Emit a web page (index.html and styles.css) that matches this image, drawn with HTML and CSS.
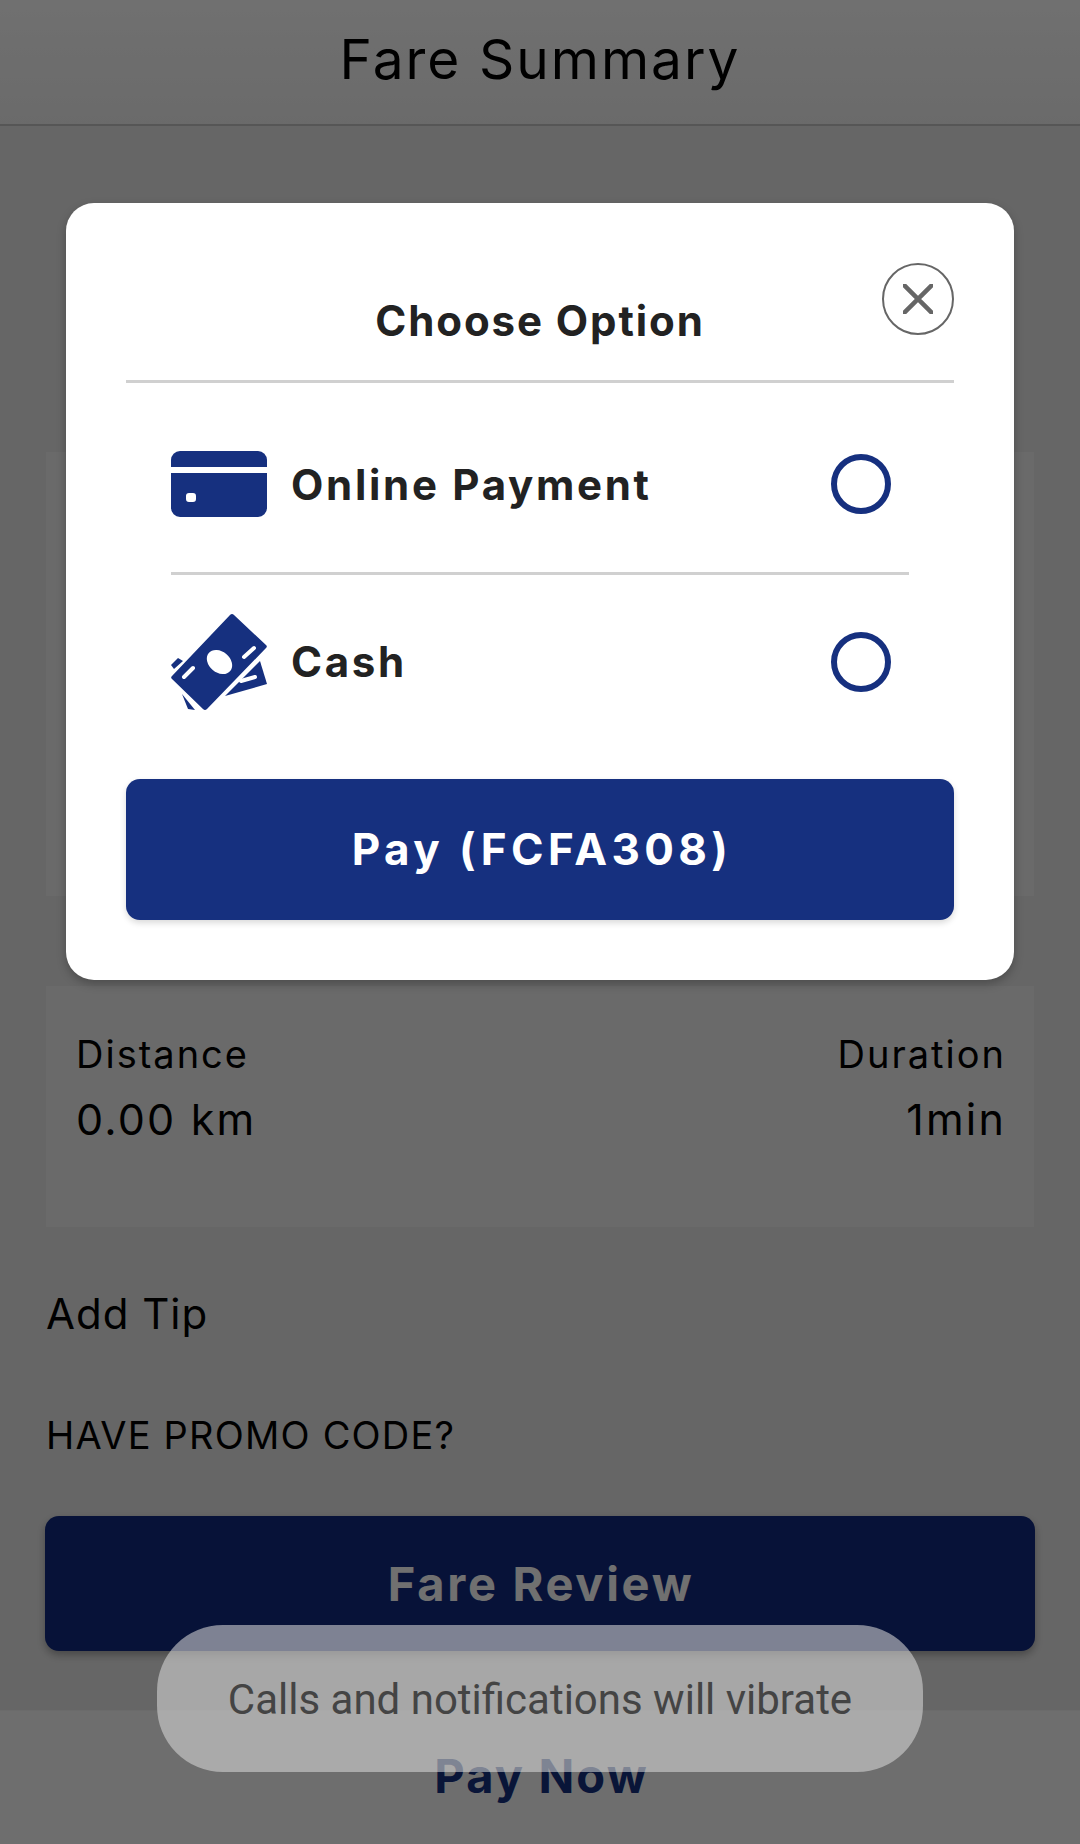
FILE: index.html
```html
<!DOCTYPE html>
<html lang="en">
<head>
<meta charset="utf-8">
<title>Fare Summary</title>
<link rel="stylesheet" href="styles.css">
</head>
<body>
<div class="screen">
  <header class="topbar"><h1 class="topbar-title">Fare Summary</h1></header>
  <main class="content">
    <section class="panel panel-fare"></section>
    <section class="panel panel-trip">
      <div class="trip-col">
        <span class="trip-label">Distance</span>
        <span class="trip-value">0.00 km</span>
      </div>
      <div class="trip-col trip-col-end">
        <span class="trip-label">Duration</span>
        <span class="trip-value">1min</span>
      </div>
    </section>
    <p class="tip">Add Tip</p>
    <p class="promo">HAVE PROMO CODE?</p>
    <button class="review" type="button">Fare Review</button>
  </main>
  <footer class="paybar"><span class="paybar-label">Pay Now</span></footer>

  <div class="scrim"></div>

  <div class="modal">
    <div class="modal-head">
      <h2 class="modal-title">Choose Option</h2>
      <span class="close">
        <svg class="close-x" viewBox="0 0 30 30"><path d="M1 1 29 29M29 1 1 29"/></svg>
      </span>
    </div>
    <div class="option option-first">
      <svg class="option-icon card-icon" viewBox="0 0 96 66">
        <path d="M0 16V9a9 9 0 0 1 9-9h78a9 9 0 0 1 9 9v7z"/>
        <path fill-rule="evenodd" d="M0 22h96v35a9 9 0 0 1-9 9H9a9 9 0 0 1-9-9zM18 42a3 3 0 0 0-3 3v3a3 3 0 0 0 3 3h4a3 3 0 0 0 3-3v-3a3 3 0 0 0-3-3z"/>
      </svg>
      <span class="option-label">Online Payment</span>
      <span class="radio"></span>
    </div>
    <div class="option option-second">
      <svg class="option-icon cash-icon" viewBox="0 0 96 98">
        <path d="M0 51 7 44 12 47 3 55Z"/>
        <path d="M11 80 24 96 17 95Z"/>
        <path d="M54 82 89 47 96 70Z"/>
        <path d="M59 1a3 3 0 0 1 4 0L95 31a2 2 0 0 1 0 3L36 95a3 3 0 0 1-4 0L1 65a2 2 0 0 1 0-3Z"/>
        <ellipse class="cash-cut" cx="48.500" cy="48" rx="14" ry="10.500" transform="rotate(40 48.500 48)"/>
        <path class="cash-mark" d="M73 43 83 34M13 63 22 54M70 67 84 63"/>
      </svg>
      <span class="option-label">Cash</span>
      <span class="radio"></span>
    </div>
    <button class="pay" type="button">Pay (FCFA308)</button>
  </div>

  <div class="toast">Calls and notifications will vibrate</div>
</div>
</body>
</html>
```

FILE: styles.css
```css
* { box-sizing: border-box; }

html, body { margin: 0; padding: 0; }

body {
  font-family: "Inter", "Open Sans", sans-serif;
  background: #e9e9e9;
  color: #000;
}

.screen {
  position: relative;
  width: 1080px;
  height: 1844px;
  display: flex;
  flex-direction: column;
  overflow: hidden;
  background: #e9e9e9;
}

.topbar {
  height: 126px;
  flex: none;
  display: flex;
  align-items: center;
  justify-content: center;
  padding-bottom: 6px;
  background: linear-gradient(#ffffff, #f2f2f2);
  border-bottom: 2px solid #c4c4c4;
}

.topbar-title {
  margin: 0;
  font-size: 55px;
  font-weight: 400;
  letter-spacing: 2px;
}

.content {
  flex: 1;
  display: flex;
  flex-direction: column;
  padding: 326px 46px 0;
}

.panel { background: #f2f2f2; }

.panel-fare { height: 444px; }

.panel-trip {
  height: 241px;
  margin-top: 90px;
  display: flex;
  justify-content: space-between;
  padding: 44px 30px 0;
}

.trip-col {
  display: flex;
  flex-direction: column;
  gap: 16px;
}

.trip-col-end {
  align-items: flex-end;
  margin-right: -2px;
}

.trip-label {
  font-size: 38px;
  line-height: 48px;
  letter-spacing: 2px;
}

.trip-value {
  font-size: 43px;
  line-height: 50px;
  letter-spacing: 2.2px;
}

.tip, .promo { margin: 0; }

.tip {
  margin-top: 60px;
  font-size: 42px;
  line-height: 54px;
  letter-spacing: 1px;
}

.promo {
  margin-top: 70px;
  font-size: 38px;
  line-height: 48px;
  letter-spacing: 1.2px;
}

.review {
  margin: 57px -1px 0;
  height: 135px;
  padding: 0 0 0 2px;
  border: 0;
  border-radius: 14px;
  background: #10297f;
  color: #fff;
  font: 700 47px "Inter", sans-serif;
  letter-spacing: 2.7px;
  box-shadow: 0 4px 8px rgba(0, 0, 0, 0.3);
}

.paybar {
  flex: none;
  height: 134px;
  display: flex;
  align-items: flex-start;
  justify-content: center;
  padding: 38px 0 0 3px;
  background: #fafafa;
  border-top: 1px solid #f4f4f4;
}

.paybar-label {
  font-size: 47px;
  line-height: 54px;
  font-weight: 700;
  color: #16307f;
  letter-spacing: 2.1px;
}

.scrim {
  position: absolute;
  inset: 0;
  background: rgba(0, 0, 0, 0.56);
}

.modal {
  position: absolute;
  left: 66px;
  top: 203px;
  width: 948px;
  height: 777px;
  padding: 0 60px;
  background: #fff;
  border-radius: 28px;
  box-shadow: 0 4px 10px rgba(0, 0, 0, 0.25);
  display: flex;
  flex-direction: column;
}

.modal-head {
  position: relative;
  height: 180px;
  flex: none;
  display: flex;
  align-items: flex-end;
  justify-content: center;
  padding-bottom: 32px;
  border-bottom: 3px solid #d0d0d0;
}

.modal-title {
  margin: 0;
  font-size: 42px;
  line-height: 54px;
  font-weight: 700;
  color: #222;
  letter-spacing: 1.9px;
}

.close {
  position: absolute;
  right: 0;
  top: 60px;
  width: 72px;
  height: 72px;
  border: 2px solid #666;
  border-radius: 50%;
  display: flex;
  align-items: center;
  justify-content: center;
}

.close-x {
  width: 30px;
  height: 30px;
  fill: none;
  stroke: #666;
  stroke-width: 4.5;
  stroke-linecap: round;
}

.option {
  flex: none;
  margin: 0 45px;
  display: flex;
  align-items: center;
}

.option-first {
  height: 192px;
  padding-top: 13px;
  border-bottom: 3px solid #d0d0d0;
}

.option-second {
  height: 176px;
  padding-bottom: 3px;
}

.option-icon {
  flex: none;
  width: 96px;
  fill: #16307f;
}

.card-icon { height: 66px; }

.cash-icon { height: 98px; margin-top: 3px; }

.cash-cut { fill: #fff; }

.cash-mark {
  fill: none;
  stroke: #fff;
  stroke-width: 4;
  stroke-linecap: round;
}

.option-label {
  flex: 1;
  margin-left: 24px;
  font-size: 42px;
  font-weight: 700;
  color: #222;
  letter-spacing: 2.7px;
}

.radio {
  flex: none;
  width: 60px;
  height: 60px;
  margin-right: 18px;
  border: 6px solid #16307f;
  border-radius: 50%;
}

.pay {
  flex: none;
  margin-top: 28px;
  height: 141px;
  padding: 0 0 2px 4px;
  border: 0;
  border-radius: 14px;
  background: #16307f;
  color: #fff;
  font: 700 44px "Inter", sans-serif;
  letter-spacing: 4.4px;
  box-shadow: 0 3px 6px rgba(0, 0, 0, 0.15);
}

.toast {
  position: absolute;
  left: 157px;
  top: 1625px;
  width: 766px;
  height: 147px;
  padding-top: 2px;
  display: flex;
  align-items: center;
  justify-content: center;
  border-radius: 66px;
  background: rgba(217, 217, 217, 0.57);
  color: #444;
  font: 400 42px "Roboto", sans-serif;
}
```
